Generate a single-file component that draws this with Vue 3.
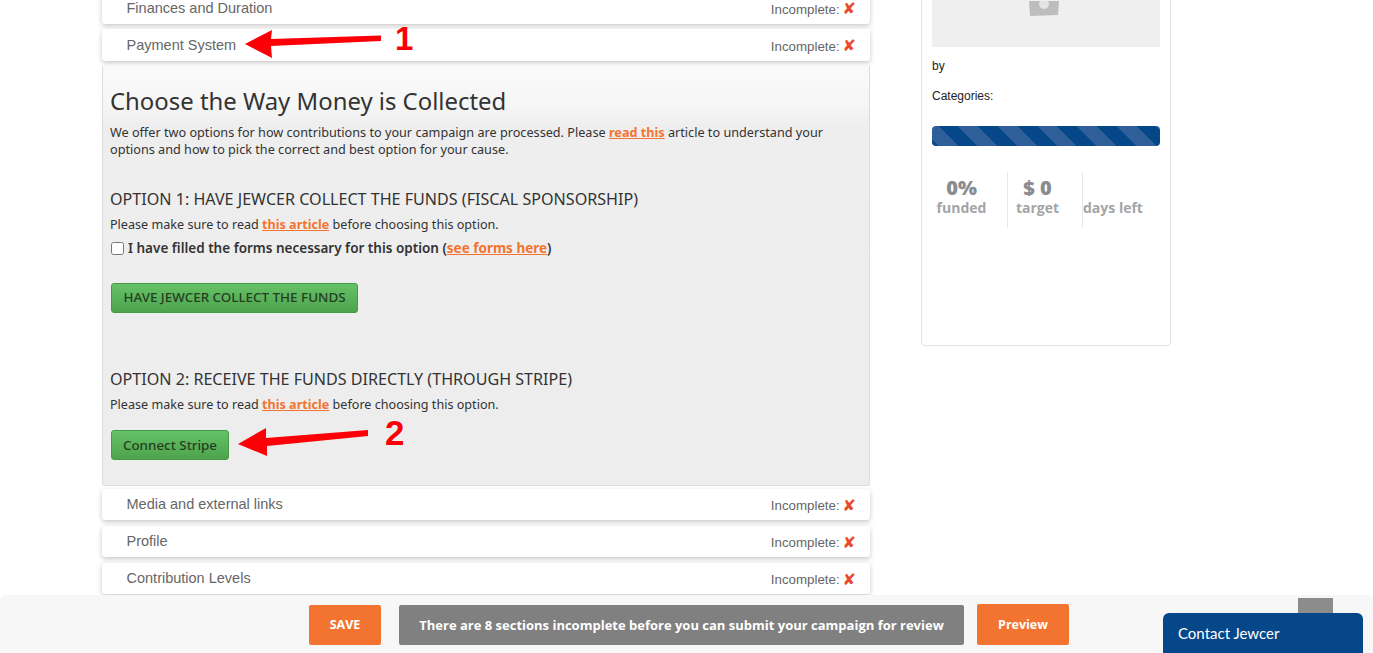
<script setup>
const topRows = ['Finances and Duration', 'Payment System']
const bottomRows = ['Media and external links', 'Profile', 'Contribution Levels']
</script>

<template>
  <div class="page">
    <div class="layout">
      <main class="left">
        <div v-for="r in topRows" :key="r" class="row top">
          <span class="row-name">{{ r }}</span>
          <span class="row-state">Incomplete: <b class="x">✘</b></span>
        </div>
        <section class="panel">
          <h2 class="title">Choose the Way Money is Collected</h2>
          <p class="intro">We offer two options for how contributions to your campaign are processed. Please <a>read this</a> article to understand your options and how to pick the correct and best option for your cause.</p>
          <h3 class="opt first">OPTION 1: HAVE JEWCER COLLECT THE FUNDS (FISCAL SPONSORSHIP)</h3>
          <p class="note">Please make sure to read <a>this article</a> before choosing this option.</p>
          <label class="check"><input type="checkbox" /><span>I have filled the forms necessary for this option (<a>see forms here</a>)</span></label>
          <button class="green wide">HAVE JEWCER COLLECT THE FUNDS</button>
          <h3 class="opt second">OPTION 2: RECEIVE THE FUNDS DIRECTLY (THROUGH STRIPE)</h3>
          <p class="note">Please make sure to read <a>this article</a> before choosing this option.</p>
          <button class="green stripe">Connect Stripe</button>
        </section>
        <div v-for="r in bottomRows" :key="r" class="row after">
          <span class="row-name">{{ r }}</span>
          <span class="row-state">Incomplete: <b class="x">✘</b></span>
        </div>
      </main>
      <aside class="card">
        <div class="thumb">
          <svg class="cam" width="32" height="16" viewBox="0 0 32 16"><path d="M1 0h30l-1 14-28 1z" fill="#bdbdbd"/><circle cx="16" cy="3" r="5" fill="#e4e4e4"/></svg>
        </div>
        <p class="meta by">by</p>
        <p class="meta cats">Categories:</p>
        <div class="bar"></div>
        <div class="stats">
          <div class="stat s1"><strong>0%</strong><span>funded</span></div>
          <div class="stat s2"><strong>$ 0</strong><span>target</span></div>
          <div class="stat s3"><strong>&nbsp;</strong><span>days left</span></div>
        </div>
      </aside>
    </div>

    <svg class="arrows" width="1373" height="653" viewBox="0 0 1373 653">
      <g fill="#fb0007">
        <path d="M245 44 272 30 271 39 381 35.500 381 41 271 46 272 58z"/>
        <path d="M238 444 266 428 266 438 368 430 368 436 267 446 267 456z"/>
      </g>
    </svg>
    <span class="mark m1">1</span>
    <span class="mark m2">2</span>

    <footer class="foot">
      <button class="orange save">SAVE</button>
      <div class="notice">There are 8 sections incomplete before you can submit your campaign for review</div>
      <button class="orange preview">Preview</button>
    </footer>
    <div class="totop"></div>
    <div class="contact">Contact Jewcer</div>
  </div>
</template>

<style>
html, body { margin: 0; background: #fff; overflow: hidden; }
</style>

<style scoped>
.page { position: relative; width: 1373px; height: 653px; overflow: hidden; background: #fff; font-family: "Liberation Sans", Arial, sans-serif; }
.layout { display: flex; align-items: flex-start; gap: 51px; padding-left: 102px; margin-top: -8px; }
.left { width: 768px; flex: none; }
.row { height: 32px; box-sizing: border-box; margin-bottom: 5px; padding: 0 14px 0 24.500px; display: flex; align-items: center; justify-content: space-between; background: #fff; border-radius: 3px; box-shadow: 0 2px 5px rgba(0,0,0,.22); }
.row.after { height: 31px; margin-bottom: 6px; }
.panel + .row { margin-top: 3px; }
.row-name { font-size: 14.500px; color: #666; position: relative; top: -1px; }
.row.top .row-name { top: 0; }
.row-state { font-size: 13.300px; color: #666; display: flex; align-items: center; gap: 3px; position: relative; top: 1px; }
.x { font-family: "DejaVu Sans", sans-serif; font-size: 16px; line-height: 1; color: #ea4a2c; font-weight: 700; }
.panel { box-sizing: border-box; height: 420px; padding: 0 7px; border: 1px solid #dcdcdc; border-top: 0; border-radius: 0 0 3px 3px; background: linear-gradient(#fafafa 0, #f6f6f6 38px, #eeeeee 60px, #ededed 100%); color: #333; font-family: "Noto Sans", "Open Sans", sans-serif; display: flow-root; }
.title { margin: 18px 0 0; font-size: 23.900px; line-height: 34px; font-weight: 400; color: #333; }
.intro { margin: 6px 0 0; font-size: 12.660px; line-height: 17px; }
.opt { margin: 0; font-size: 16.100px; line-height: 20px; font-weight: 400; color: #333; }
.first { margin-top: 31px; }
.second { margin-top: 56px; }
.note { margin: 6px 0 0; font-size: 12.600px; line-height: 20px; }
.check { display: flex; align-items: center; gap: 4px; margin-top: 3px; height: 20px; font-size: 13.500px; font-weight: 600; }
.check input { width: 13px; height: 13px; margin: 1px 0 0 1px; }
a { color: #f37430; font-weight: 700; text-decoration: underline; }
.green { display: block; box-sizing: border-box; height: 30px; margin-left: 0; border: 1px solid #459a45; border-radius: 3px; background: linear-gradient(#66c266, #4da34d); color: #24401f; font-family: "Noto Sans", sans-serif; font-size: 13.400px; font-weight: 500; padding: 0 0 2px; position: relative; left: 1px; }
.wide { width: 247px; margin-top: 25px; }
.stripe { width: 118px; margin-top: 15px; padding: 0; }
.card { box-sizing: border-box; width: 250px; height: 354px; padding: 0 10px; border: 1px solid #e3e3e3; border-radius: 4px; flex: none; position: relative; color: #222; }
.thumb { height: 54px; background: #efefef; display: flex; justify-content: center; align-items: flex-start; position: relative; }
.cam { position: absolute; left: 96px; top: 8px; }
.meta { margin: 0; font-size: 12px; line-height: 16px; }
.by { margin-top: 11px; }
.cats { margin-top: 14px; }
.bar { height: 20px; margin-top: 22px; border-radius: 4px; background: repeating-linear-gradient(45deg, #064789 0 4.500px, #2f5f99 4.500px 18.500px, #064789 18.500px 28px); }
.stats { display: flex; margin-top: 26px; height: 56px; font-family: "Open Sans", sans-serif; color: #8a8c8f; }
.stat { display: flex; flex-direction: column; align-items: center; box-sizing: border-box; }
.stat strong { font-size: 20px; line-height: 27px; font-weight: 800; margin-top: 2px; }
.stat span { font-size: 14px; line-height: 14px; font-weight: 700; color: #a3a5a7; }
.s1 { width: 76px; padding-right: 16px; border-right: 1px solid #e8e8e8; }
.s2 { width: 75px; padding-right: 15px; border-right: 1px solid #e8e8e8; }
.s3 { width: 77px; align-items: flex-start; }
.arrows { position: absolute; left: 0; top: 0; pointer-events: none; }
.mark { position: absolute; font-weight: 700; color: #fb0007; font-size: 35px; line-height: 1; }
.m1 { left: 395px; top: 22px; font-size: 33px; }
.m2 { left: 385px; top: 415px; }
.foot { position: absolute; left: 0; right: 0; bottom: 0; height: 58px; background: #f7f7f7; border-radius: 6px 6px 0 0; font-family: "Open Sans", sans-serif; font-weight: 700; color: #fff; display: flex; align-items: center; padding: 1px 0 0 309px; box-sizing: border-box; }
.orange { border: 0; background: #f37430; color: #fff; border-radius: 2px; font-family: inherit; font-weight: 700; font-size: 12.500px; padding: 0; }
.save { width: 72px; height: 40px; }
.notice { width: 565px; height: 40px; margin-left: 18px; background: #808080; border-radius: 2px; display: flex; align-items: center; justify-content: center; font-size: 13px; }
.preview { width: 92px; height: 41px; margin-left: 13px; }
.totop { position: absolute; left: 1298px; top: 598px; width: 35px; height: 20px; background: #8c8c8c; }
.contact { position: absolute; left: 1163px; top: 613px; width: 200px; height: 40px; box-sizing: border-box; padding: 11px 15px 0; background: #064789; border-radius: 6px 6px 0 0; color: #fff; font-family: Lato, sans-serif; font-size: 15px; line-height: 18px; }
</style>
